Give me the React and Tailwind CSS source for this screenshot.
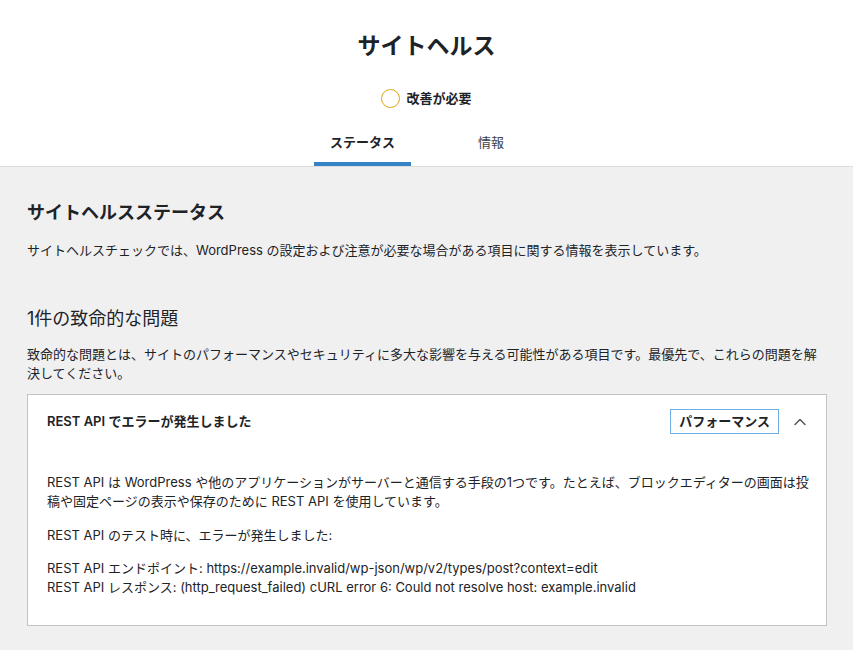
import { ChevronUp } from "lucide-react";

const font = { fontFamily: 'Inter, "Noto Sans CJK JP", sans-serif' };

export default function App() {
  return (
    <div className="min-h-screen bg-[#f0f0f1] text-[#1d2327]" style={font}>
      {/* Header */}
      <div className="bg-white border-b border-[#dcdcde]">
        <h1 className="pt-[30px] text-center text-[23px] font-bold leading-[32px]">サイトヘルス</h1>
        <div className="mt-[27px] flex items-center justify-center gap-[6px]">
          <span className="w-[19px] h-[19px] rounded-full border-[1.5px] border-[#dba617]" />
          <span className="text-[13px] font-semibold text-[#1d2327]">改善が必要</span>
        </div>
        <div className="mt-[14px] pl-[32px] flex justify-center">
          <div className="w-[97px] pt-[10px] pb-[10px] text-center text-[13px] font-semibold border-b-4 border-[#3582c4]">ステータス</div>
          <div className="w-[160px] pt-[10px] pb-[10px] text-center text-[13px] text-[#3c434a] border-b-4 border-transparent">情報</div>
        </div>
      </div>

      {/* Body */}
      <div className="px-[27px] pt-[33px] pb-6">
        <h2 className="text-[18px] font-semibold leading-[26px]">サイトヘルスステータス</h2>
        <p className="mt-[15px] text-[13px] leading-[19px]">
          サイトヘルスチェックでは、WordPress の設定および注意が必要な場合がある項目に関する情報を表示しています。
        </p>

        <h3 className="mt-[46px] text-[18px] leading-[26px]">1件の致命的な問題</h3>
        <p className="mt-[13px] text-[13px] leading-[19px]">
          致命的な問題とは、サイトのパフォーマンスやセキュリティに多大な影響を与える可能性がある項目です。最優先で、これらの問題を解決してください。
        </p>

        <div className="mt-[11px] mr-[-1px] bg-white border border-[#c3c4c7]">
          <div className="flex items-center justify-between pl-[19px] pr-[16px] h-[53px]">
            <span className="text-[13px] font-semibold">REST API でエラーが発生しました</span>
            <div className="flex items-center gap-[11px]">
              <span className="border border-[#72aee6] px-[8px] py-[3px] text-[13px] font-semibold leading-[17px]">パフォーマンス</span>
              <ChevronUp size={20} strokeWidth={1.75} className="text-[#50575e]" />
            </div>
          </div>
          <div className="pl-[19px] pr-[12px] pt-[25px] pb-[28px] text-[13px] leading-[19px]">
            <p>
              REST API は WordPress や他のアプリケーションがサーバーと通信する手段の1つです。たとえば、ブロックエディターの画面は投稿や固定ページの表示や保存のために REST API を使用しています。
            </p>
            <p className="mt-[15px]">REST API のテスト時に、エラーが発生しました:</p>
            <p className="mt-[14px]">
              REST API エンドポイント: https://example.invalid/wp-json/wp/v2/types/post?context=edit
              <br />
              REST API レスポンス: (http_request_failed) cURL error 6: Could not resolve host: example.invalid
            </p>
          </div>
        </div>
      </div>
    </div>
  );
}
